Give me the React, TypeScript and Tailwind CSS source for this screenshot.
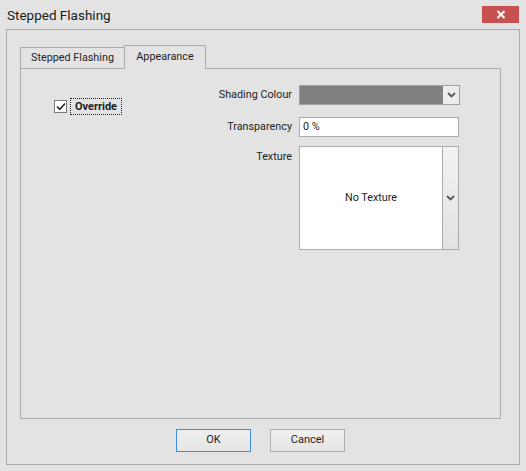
import React from "react";

const Chevron = ({ className = "" }: { className?: string }) => (
  <svg width="9" height="6" viewBox="0 0 9 6" className={className}>
    <path d="M1 1 L4.5 4.5 L8 1" fill="none" stroke="#5a5a5a" strokeWidth="1.8" />
  </svg>
);

export default function App() {
  return (
    <div
      className="w-[526px] h-[471px] bg-[#e3e3e3] text-[#1e1e1e] flex flex-col overflow-hidden"
      style={{ fontFamily: 'Roboto, "Noto Sans", sans-serif' }}
    >
      {/* title bar */}
      <div className="h-[29px] flex items-start justify-between">
        <div className="pl-[7px] pt-[5px] text-[13.5px] leading-[20px] text-[#1a1a1a]">Stepped Flashing</div>
        <div className="mt-[6px] mr-[7px] w-[37px] h-[17px] bg-[#c75050] flex items-center justify-center">
          <svg width="10" height="9" viewBox="0 0 10 9">
            <path d="M1.5 1 L8.5 8 M8.5 1 L1.5 8" stroke="#ffffff" strokeWidth="2" />
          </svg>
        </div>
      </div>

      {/* frame */}
      <div className="mx-[6px] h-[436px] border border-[#acacac] pl-[13px] pr-[18px] pt-[15px] flex flex-col">
        {/* tabs */}
        <div className="h-[23px] flex items-end text-[10.8px]">
          <div className="h-[21px] w-[105px] border border-b-0 border-[#acacac] flex items-center justify-center leading-none">
            Stepped Flashing
          </div>
          <div className="h-[24px] w-[82px] -ml-px -mb-px relative z-10 bg-[#e3e3e3] border border-b-0 border-[#acacac] flex items-center justify-center leading-none pb-[1px]">
            Appearance
          </div>
        </div>

        {/* panel */}
        <div className="h-[351px] border border-[#acacac] flex text-[10.8px]">
          <div className="w-[179px] pl-[33px] pt-[29px]">
            <div className="flex items-center">
              <div className="w-[13px] h-[13px] border border-[#7a7a7a] bg-white flex items-center justify-center">
                <svg width="10" height="9" viewBox="0 0 10 9">
                  <path d="M1 4.5 L3.8 7.3 L9 1.5" fill="none" stroke="#222" strokeWidth="1.6" />
                </svg>
              </div>
              <div className="ml-[3px] h-[17px] w-[52px] border border-dotted border-[#222] flex items-center justify-center font-bold leading-none text-[11px]">
                Override
              </div>
            </div>
          </div>

          <div className="pt-[16px] grid grid-cols-[92px_161px] gap-x-[7px] content-start">
            <div className="h-[20px] flex items-center justify-end whitespace-nowrap">Shading Colour</div>
            <div className="h-[20px] border border-[#a0a0a0] flex">
              <div className="flex-1 bg-[#808080]" />
              <div className="w-[16px] bg-[#ececec] flex items-center justify-center">
                <Chevron />
              </div>
            </div>

            <div className="mt-[12px] h-[20px] flex items-center justify-end whitespace-nowrap">Transparency</div>
            <div className="mt-[12px] h-[20px] w-[160px] border border-[#acacac] bg-white flex items-center pl-[3px]">
              0 %
            </div>

            <div className="mt-[9px] pt-[3px] flex justify-end items-start whitespace-nowrap">Texture</div>
            <div className="mt-[9px] h-[104px] w-[160px] border border-[#acacac] bg-white flex">
              <div className="flex-1 flex items-center justify-center">No Texture</div>
              <div className="w-[16px] border-l border-[#acacac] bg-gradient-to-b from-[#f2f2f2] to-[#e2e2e2] flex items-center justify-center">
                <Chevron />
              </div>
            </div>
          </div>
        </div>

        {/* buttons */}
        <div className="mt-[10px] flex justify-center gap-[19px] text-[11px]">
          <div className="w-[75px] h-[23px] border border-[#3d8ee4] bg-gradient-to-b from-[#f0f0f0] to-[#e5e5e5] flex items-center justify-center">
            OK
          </div>
          <div className="w-[75px] h-[23px] border border-[#adadad] bg-gradient-to-b from-[#f0f0f0] to-[#e5e5e5] flex items-center justify-center">
            Cancel
          </div>
        </div>
      </div>
    </div>
  );
}
